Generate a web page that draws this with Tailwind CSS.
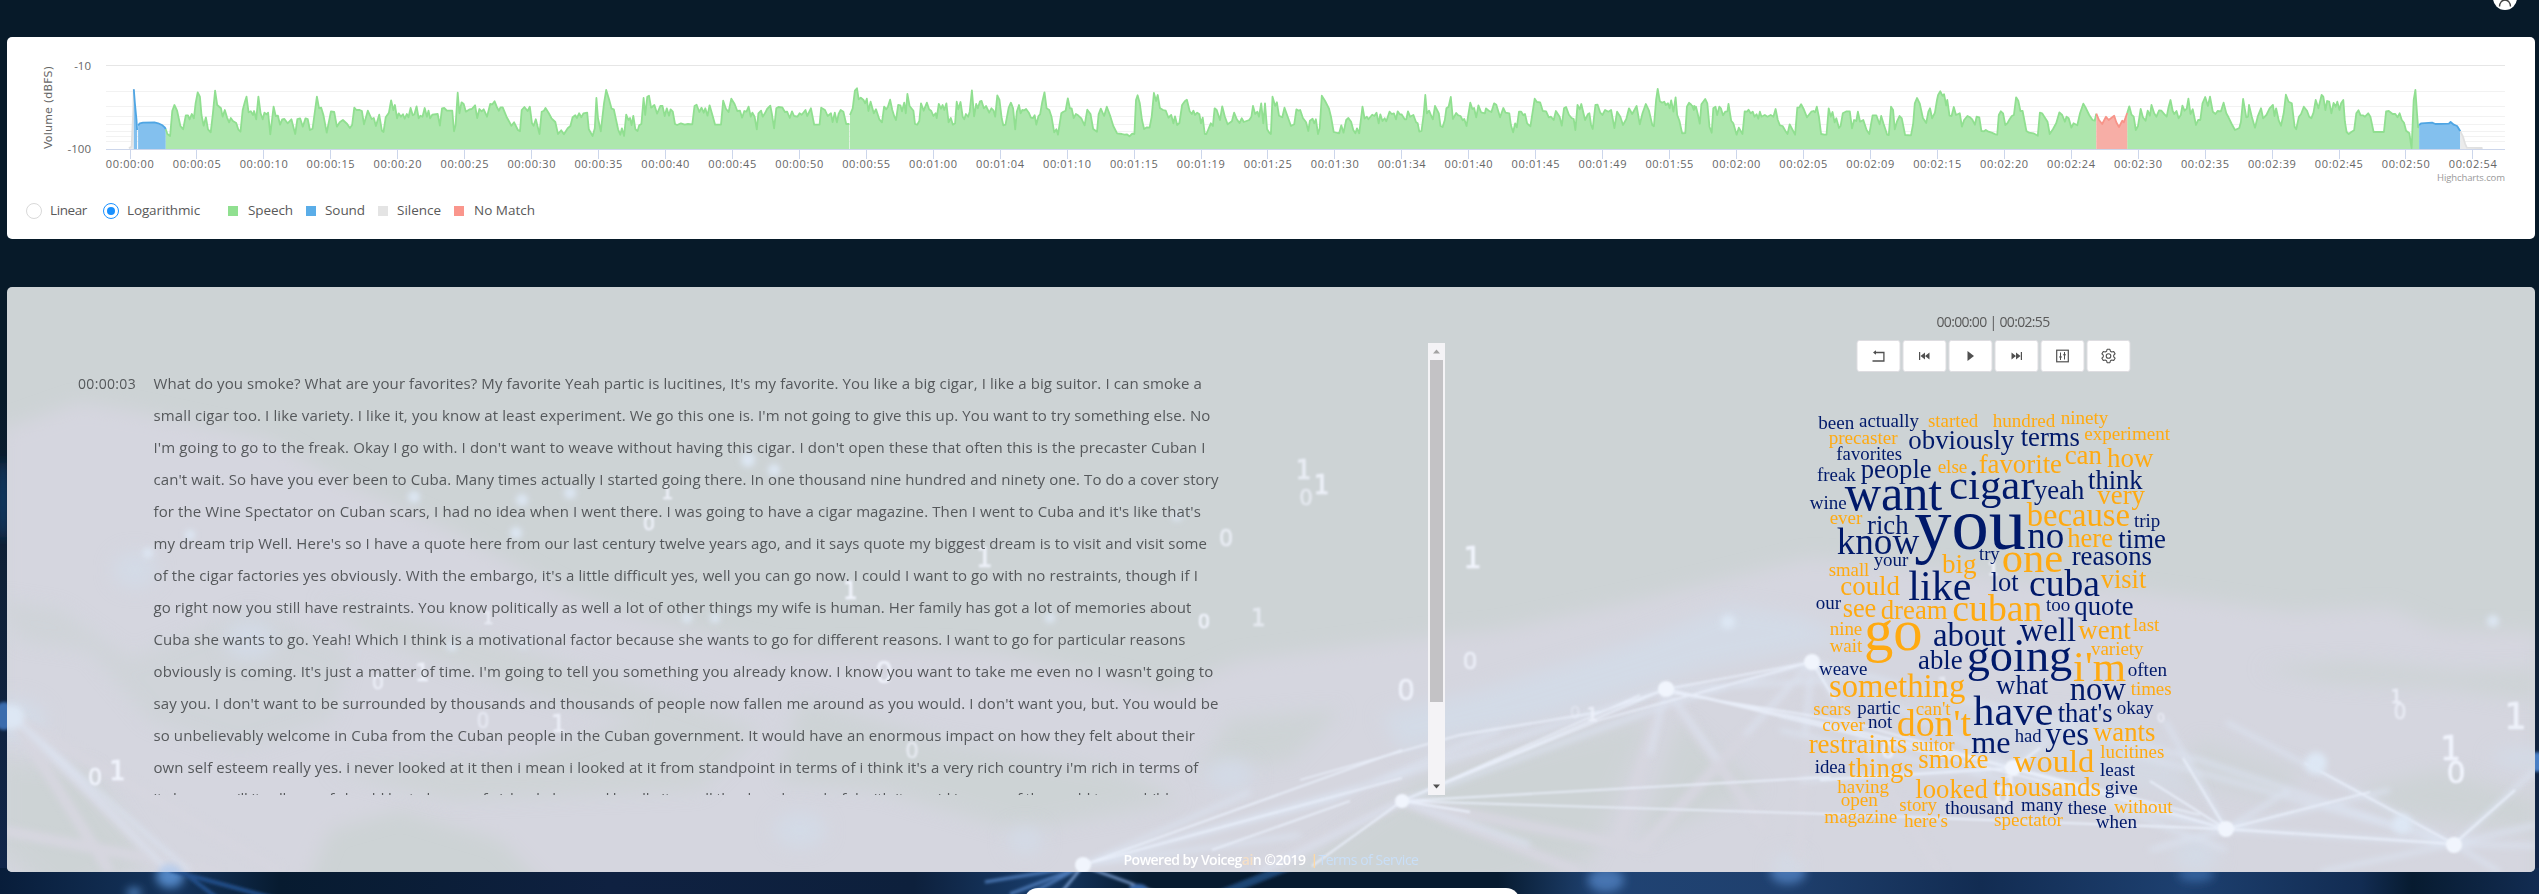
<!DOCTYPE html>
<html lang="en">
<head>
<meta charset="utf-8">
<title>Voicegain transcript</title>
<script src="https://cdn.jsdelivr.net/npm/@tailwindcss/browser@4"></script>
</head>
<body class="relative h-[894px] w-[2539px] overflow-hidden bg-[#071a29] font-['Open_Sans','Noto_Sans',sans-serif] text-[#595959]">

<!-- page backdrop -->
<svg class="absolute inset-0" width="2539" height="894" viewBox="0 0 2539 894">
  <defs>
    <filter id="b6" x="-50%" y="-50%" width="200%" height="200%"><feGaussianBlur stdDeviation="5"/></filter>
    <filter id="b2" x="-50%" y="-50%" width="200%" height="200%"><feGaussianBlur stdDeviation="1.5"/></filter>
    <linearGradient id="side" x1="0" y1="0" x2="0" y2="1"><stop offset="0" stop-color="#071a29"/><stop offset=".35" stop-color="#0f2036"/><stop offset="1" stop-color="#11264a"/></linearGradient>
    <linearGradient id="foot" x1="0" y1="0" x2="1" y2="0"><stop offset="0" stop-color="#081d3a"/><stop offset=".07" stop-color="#15345c"/><stop offset=".11" stop-color="#071b30"/><stop offset=".24" stop-color="#0f2141"/><stop offset=".36" stop-color="#0d203c"/><stop offset=".41" stop-color="#183c6a"/><stop offset=".45" stop-color="#071b30"/><stop offset=".59" stop-color="#071b30"/><stop offset=".63" stop-color="#204373"/><stop offset=".7" stop-color="#1f406e"/><stop offset=".78" stop-color="#122c52"/><stop offset=".86" stop-color="#1d4070"/><stop offset=".93" stop-color="#122c52"/><stop offset=".95" stop-color="#071b30"/><stop offset="1" stop-color="#122c52"/></linearGradient>
  </defs>
  <rect x="0" y="400" width="10" height="480" fill="url(#side)"/>
  <rect x="2530" y="540" width="9" height="340" fill="url(#side)"/>
  <ellipse cx="3" cy="500" rx="5" ry="40" fill="#153c6b" filter="url(#b6)"/>
  <ellipse cx="4" cy="716" rx="10" ry="14" fill="#3a6cad" filter="url(#b2)"/>
  <ellipse cx="2537" cy="762" rx="8" ry="10" fill="#4a7fc4" filter="url(#b2)"/>
  <rect x="0" y="868" width="2539" height="26" fill="url(#foot)"/>
  <g filter="url(#b6)">
    <ellipse cx="170" cy="876" rx="14" ry="12" fill="#5387c6"/>
    <ellipse cx="134" cy="893" rx="7" ry="5" fill="#5387c6"/>
    <ellipse cx="1606" cy="880" rx="18" ry="12" fill="#4674b1"/>
    <ellipse cx="1788" cy="872" rx="18" ry="12" fill="#4674b1"/>
    <ellipse cx="2196" cy="874" rx="18" ry="8" fill="#34629c"/>
  </g>
  <g stroke="#4b78b5" fill="none" filter="url(#b2)">
    <path d="M1083 866L1010 894M1083 866L1030 894M1083 866L985 882" stroke-width="3"/>
    <path d="M1083 866L1160 894M1083 866L1060 894" stroke="#8db1e6" stroke-width="2"/>
    <path d="M1300 862L1220 894" stroke="#1f4473" stroke-width="8"/>
    <ellipse cx="1138" cy="888" rx="9" ry="4" fill="#3766a6" stroke="none"/>
    <path d="M170 870L280 900M180 870L220 900" stroke-width="4" stroke="#214e88"/>
  </g>
</svg>

<div class="relative flex h-[894px] flex-col px-[7px] pr-1">
  <header class="flex h-[37px] shrink-0 items-start justify-end pr-[18px]">
    <svg class="-mt-[14px] block" width="24" height="24" viewBox="0 0 24 24" fill="none"><circle cx="12" cy="12" r="12" fill="#fff"/><path d="M6.500 20.500a5.500 6.500 0 0 1 11 0" stroke="#444" stroke-width="1.400"/><circle cx="12" cy="9" r="4.500" stroke="#444" stroke-width="1.400"/></svg>
  </header>

  <!-- volume chart -->
  <section class="h-[202px] shrink-0 rounded-[5px] bg-white">
    <svg class="block" width="2528" height="150" viewBox="7 37 2528 150" id="chart">
      <g stroke="#f2f2f2"><path d="M106 91.500H2505M106 106.500H2505M106 116.500H2505M106 124.500H2505M106 131.500H2505M106 136.500H2505M106 141.500H2505"/></g>
      <path d="M106 65.500H2505" stroke="#e6e6e6"/>
      <g id="areas"></g>
      <path d="M106 149.500H2505" stroke="#ccd6eb"/>
      <g id="ticks" class="text-[11px]" fill="#666" text-anchor="middle"></g>
      <g class="text-[11.500px]" fill="#666" text-anchor="end"><text x="91" y="70">-10</text><text x="91" y="153">-100</text></g>
      <text class="font-['DejaVu_Sans','Open_Sans',sans-serif] text-[11px]" fill="#666" transform="translate(52 149) rotate(-90)" textLength="83">Volume (dBFS)</text>
      <text x="2505" y="181" class="text-[9.500px]" fill="#999" text-anchor="end" textLength="68">Highcharts.com</text>
    </svg>
    <div class="flex h-[47px] items-center pl-[19px] text-[13.500px]">
      <span class="size-4 rounded-full border border-[#d9d9d9]"></span><span class="ml-2" data-w="37">Linear</span>
      <span class="ml-4 flex size-4 items-center justify-center rounded-full border border-[#1890ff]"><i class="size-2 rounded-full bg-[#1890ff]"></i></span><span class="ml-2" data-w="73">Logarithmic</span>
      <i class="ml-[28px] size-2.5 bg-[#90e090]"></i><span class="ml-[10px]" data-w="45">Speech</span>
      <i class="ml-[13px] size-2.5 bg-[#5aade8]"></i><span class="ml-[9px]" data-w="40">Sound</span>
      <i class="ml-[13px] size-2.5 bg-[#e4e4e4]"></i><span class="ml-[9px]" data-w="44">Silence</span>
      <i class="ml-[13px] size-2.5 bg-[#fa968c]"></i><span class="ml-[10px]" data-w="61">No Match</span>
    </div>
  </section>

  <!-- transcript and player -->
  <section class="relative mt-12 flex h-[585px] shrink-0 items-start overflow-hidden rounded-[5px] bg-[#cdd3d5]">
    <svg class="absolute inset-0" width="2528" height="585" viewBox="7 287 2528 585">
      <defs>
        <filter id="soft" x="-20%" y="-20%" width="140%" height="140%"><feGaussianBlur stdDeviation="9"/></filter>
        <filter id="s1" filterUnits="userSpaceOnUse" x="0" y="280" width="2539" height="600"><feGaussianBlur stdDeviation=".8"/></filter>
        <filter id="s3" filterUnits="userSpaceOnUse" x="0" y="280" width="2539" height="600"><feGaussianBlur stdDeviation="3"/></filter>
      </defs>
      <g filter="url(#soft)" fill="#d5d6df">
        <path d="M0 430L80 402L130 410L270 440L340 480L450 530L560 590L650 620L780 650L900 648L1000 652L1170 690L1240 660L1400 640L1500 630L1640 600L1810 558L1950 570L2150 593L2290 612L2390 608L2440 630L2539 632V900H560L500 840L400 810L330 830L300 900H0Z"/>
      </g>
      <g filter="url(#soft)" fill="#cdd3d5">
        <path d="M0 600L20 640L90 650L150 720L240 750L330 720L350 650L250 610L130 660L60 610Z" opacity=".7"/>
        <path d="M0 760L90 770L150 860L60 900L0 850Z"/>
        <path d="M330 770L520 760L640 720L520 690L380 640L320 600L420 620L620 680L760 730L700 790L450 800Z" opacity=".8"/>
        <path d="M800 700L940 740L1120 770L1180 800L1020 830L880 790L780 780Z"/>
        <path d="M1230 720L1340 710L1290 760L1200 770Z"/>
        <path d="M1250 900L1420 780L1560 740L1650 720L1590 860L1500 890Z"/>
        <path d="M1680 720L1760 790L1640 840Z"/>
        <path d="M2260 668L2350 662L2460 672L2535 670V700L2450 688L2330 682Z"/>
        <path d="M2360 790L2440 770L2535 800V830L2400 815Z"/>
        <path d="M2200 740L2300 770L2280 800L2180 780Z" opacity=".7"/>
      </g>
      <g filter="url(#soft)" fill="#d3dae6">
        <path d="M1380 715L1480 690L1640 640L1730 605L1800 615L1850 640L1700 670L1540 720L1400 750Z"/>
        <ellipse cx="800" cy="830" rx="26" ry="18"/><ellipse cx="1025" cy="840" rx="18" ry="14"/>
        <ellipse cx="135" cy="570" rx="22" ry="18"/><ellipse cx="250" cy="640" rx="26" ry="20"/>
        <ellipse cx="1230" cy="775" rx="24" ry="16"/><ellipse cx="1460" cy="710" rx="26" ry="12"/>
        <ellipse cx="1788" cy="866" rx="16" ry="12"/><ellipse cx="2196" cy="855" rx="22" ry="18"/>
        <ellipse cx="2525" cy="758" rx="34" ry="10"/><ellipse cx="12" cy="720" rx="34" ry="22"/>
        <path d="M1900 700L2140 720L2200 800L2010 760Z" opacity=".6"/>
      </g>
      <g stroke="#d6d6df" stroke-width="11" fill="none" filter="url(#s3)">
        <path d="M1666 689L1615 850M1666 689L1765 830M1812 662L1640 850M1812 662L1798 860M1812 662L1940 872M1402 801L1250 872M1402 801L1580 872M1402 801L1650 850"/>
        <path d="M12 716L170 872M12 716L280 872M12 716L110 872M0 830L220 872"/>
      </g>
      <g stroke="#dbe2ef" stroke-width="4" fill="none" filter="url(#s3)">
        <path d="M1083 865L1402 775L1666 689M1083 865L1330 800L1500 730M1083 865L1300 835M1402 801L1260 872M1402 801L1530 845M1083 865L1250 792"/>
        <path d="M1402 801L1666 705L1812 662M1812 662L2200 760L2454 844M1812 662L2013 768M1812 662L1745 735M1812 662L1805 735M1812 662L1880 770M1666 689L1840 680M1666 689L1650 755M1666 689L1718 760"/>
        <path d="M1780 715L2013 768L2226 829M1780 730L2226 829M2226 829L2390 790M2226 829L2454 844M2226 829L2150 850M2226 829L2290 790M2226 829L2165 720M2454 844L2226 722M2454 844L2535 770M2454 844L2535 825M2454 844L2535 846M2454 844L2120 750M2013 768L1800 780M2013 768L2226 850M2013 768L2080 715M2454 844L2320 872M2454 844L2500 872"/>
        <path d="M12 716L190 872M12 716L170 872"/>
      </g>
      <g stroke="#eaf0fb" stroke-width="1.800" fill="none" filter="url(#s1)">
        <path d="M1402 801L1666 689L1812 662M1402 801L1600 720L1812 662M1300 780L1460 735L1600 712L1666 689M1402 801L1640 695M1402 801L1830 777M1402 801L1830 814M1666 689L1800 718L2013 768M1666 689L1830 728L2100 796M1666 692L1850 722L2226 829" opacity=".9"/>
        <path d="M1083 865L1402 750M1083 865L1402 778M1212 850L1350 801M1312 866L1402 801M1402 801L1470 812M1830 814L2226 829M1820 780L2013 768M2013 768L2226 829M2150 781L2226 829M2226 829L2183 758M2226 829L2370 792M2226 829L2454 844M2454 844L2305 763M2454 844L2515 790M2013 768L2200 815M2013 768L2040 748M1812 662L1835 700"/>
      </g>
      <g fill="#f1f5fd" filter="url(#s1)">
        <circle cx="1402" cy="801" r="7"/><circle cx="1083" cy="865" r="8"/><circle cx="1666" cy="689" r="8"/><circle cx="1812" cy="662" r="8"/><circle cx="2013" cy="768" r="8"/><circle cx="2226" cy="829" r="8"/><circle cx="2454" cy="845" r="8"/>
      </g>
      <g filter="url(#s3)" fill="#dde7f4"><circle cx="2316" cy="763" r="11"/><circle cx="2402" cy="824" r="10"/><circle cx="12" cy="717" r="12"/><circle cx="170" cy="877" r="13" fill="#b9cdeb"/><circle cx="1728" cy="622" r="7"/>
        <circle cx="414" cy="497" r="6"/><circle cx="522" cy="500" r="6"/><circle cx="570" cy="493" r="6"/><circle cx="748" cy="460" r="7"/><circle cx="774" cy="470" r="6"/><circle cx="516" cy="533" r="6"/><circle cx="148" cy="553" r="5"/><circle cx="190" cy="535" r="5"/><circle cx="687" cy="618" r="5"/><circle cx="715" cy="618" r="5"/><circle cx="452" cy="646" r="5"/><circle cx="523" cy="643" r="5"/><circle cx="1050" cy="618" r="5"/><circle cx="1177" cy="516" r="5"/><circle cx="2493" cy="621" r="6"/></g>
      <g id="bits" fill="#f1f4fd" stroke="#f1f4fd" stroke-width=".7" text-anchor="middle" filter="url(#s1)"></g>
    </svg>

    <div class="relative mt-14 flex h-[452px] w-[1438px] shrink-0">
      <div class="flex w-[1421px] overflow-hidden pl-[71px] pt-[24px] text-[15px] leading-8 text-[#55585b]">
        <div class="w-[75.500px] shrink-0"><span data-w="58" class="whitespace-nowrap text-[14px]">00:00:03</span></div>
        <div class="flex flex-col items-start whitespace-nowrap">
          <span class="h-8 shrink-0" data-w="1048.500">What do you smoke? What are your favorites? My favorite Yeah partic is lucitines, It's my favorite. You like a big cigar, I like a big suitor. I can smoke a</span>
          <span class="h-8 shrink-0" data-w="1057">small cigar too. I like variety. I like it, you know at least experiment. We go this one is. I'm not going to give this up. You want to try something else. No</span>
          <span class="h-8 shrink-0" data-w="1052">I'm going to go to the freak. Okay I go with. I don't want to weave without having this cigar. I don't open these that often this is the precaster Cuban I</span>
          <span class="h-8 shrink-0" data-w="1065">can't wait. So have you ever been to Cuba. Many times actually I started going there. In one thousand nine hundred and ninety one. To do a cover story</span>
          <span class="h-8 shrink-0" data-w="1047.500">for the Wine Spectator on Cuban scars, I had no idea when I went there. I was going to have a cigar magazine. Then I went to Cuba and it's like that's</span>
          <span class="h-8 shrink-0" data-w="1053.500">my dream trip Well. Here's so I have a quote here from our last century twelve years ago, and it says quote my biggest dream is to visit and visit some</span>
          <span class="h-8 shrink-0" data-w="1044.500">of the cigar factories yes obviously. With the embargo, it's a little difficult yes, well you can go now. I could I want to go with no restraints, though if I</span>
          <span class="h-8 shrink-0" data-w="1038">go right now you still have restraints. You know politically as well a lot of other things my wife is human. Her family has got a lot of memories about</span>
          <span class="h-8 shrink-0" data-w="1032">Cuba she wants to go. Yeah! Which I think is a motivational factor because she wants to go for different reasons. I want to go for particular reasons</span>
          <span class="h-8 shrink-0" data-w="1060">obviously is coming. It's just a matter of time. I'm going to tell you something you already know. I know you want to take me even no I wasn't going to</span>
          <span class="h-8 shrink-0" data-w="1065">say you. I don't want to be surrounded by thousands and thousands of people now fallen me around as you would. I don't want you, but. You would be</span>
          <span class="h-8 shrink-0" data-w="1041.500">so unbelievably welcome in Cuba from the Cuban people in the Cuban government. It would have an enormous impact on how they felt about their</span>
          <span class="h-8 shrink-0" data-w="1045">own self esteem really yes. i never looked at it then i mean i looked at it from standpoint in terms of i think it's a very rich country i'm rich in terms of</span>
          <span class="-mt-px h-8 shrink-0" data-w="1027">its human will its all way of should be to buy a safe island place and hurdle it a well thank and wonderful with its rapid income of the world to my child a</span>
        </div>
      </div>
      <div class="flex h-[452px] w-[17px] flex-col items-center bg-[#f4f3f6]">
        <svg width="17" height="17" viewBox="0 0 17 17"><path d="M5 10.500L8.500 6.500L12 10.500Z" fill="#a3a3a3"/></svg>
        <div class="h-[342px] w-[13px] bg-[#c3c2c5]"></div>
        <svg class="mt-auto" width="17" height="17" viewBox="0 0 17 17"><path d="M5 6.500L8.500 10.500L12 6.500Z" fill="#505050"/></svg>
      </div>
    </div>

    <div class="relative flex grow flex-col items-center">
      <div class="ml-[6px] mt-6 whitespace-nowrap text-[14px] leading-[22px]"><span data-w="113">00:00:00 | 00:02:55</span></div>
      <div class="mt-[7px] flex w-[274px] translate-x-[3.500px] gap-0.5 text-[#505050] [&>span]:flex [&>span]:h-8 [&>span]:w-11 [&>span]:items-center [&>span]:justify-center [&>span]:rounded-[3px] [&>span]:border [&>span]:border-[#dedde1] [&>span]:bg-white">
        <span><svg width="14" height="14" viewBox="0 0 14 14" fill="none" stroke="currentColor" stroke-width="1.300"><path d="M3 3.500H12.400V12H1"/><path d="M1.500 3.500L4.500 1.200V5.800Z" fill="currentColor" stroke="none"/></svg></span>
        <span><svg width="12" height="10" viewBox="0 0 12 10" fill="currentColor"><path d="M.5 1H1.700V9H.500ZM2 5L6.500 1.500V8.500ZM6.500 5L11 1.500V8.500Z"/></svg></span>
        <span><svg width="8" height="12" viewBox="0 0 8 12" fill="currentColor"><path d="M1 1L7.500 6L1 11Z"/></svg></span>
        <span><svg width="12" height="10" viewBox="0 0 12 10" fill="currentColor"><path d="M11.500 1H10.300V9H11.500ZM10 5L5.500 1.500V8.500ZM5.500 5L1 1.500V8.500Z"/></svg></span>
        <span><svg width="14" height="14" viewBox="0 0 14 14" fill="none" stroke="currentColor" stroke-width="1.200"><rect x="1.200" y="1.200" width="11.600" height="11.600"/><path d="M5 3.500V11M9 3V10.500" stroke-width="1"/><path d="M3.300 7.500H6.700L5 9.800ZM7.300 6.200H10.700L9 3.900Z" fill="currentColor" stroke="none"/></svg></span>
        <span><svg width="16" height="16" viewBox="0 0 16 16" fill="none" stroke="currentColor" stroke-width="1.100" stroke-linejoin="round"><circle cx="8" cy="8" r="2.300"/><path d="M6.600 1.300H9.400L9.900 3.200L11.300 4L13.200 3.500L14.600 5.900L13.200 7.200V8.800L14.600 10.100L13.200 12.500L11.300 12L9.900 12.800L9.400 14.700H6.600L6.100 12.800L4.700 12L2.800 12.500L1.400 10.100L2.800 8.800V7.200L1.400 5.900L2.800 3.500L4.700 4L6.100 3.200Z"/></svg></span>
      </div>
      <svg class="mt-[14px] -translate-x-px overflow-visible" width="420" height="460" viewBox="1780 386 420 460" id="cloud"></svg>
    </div>

    <footer class="absolute left-[1116.500px] top-[562px] flex whitespace-pre text-[14px] leading-[22px] text-white"><span data-w="182" class="font-semibold">Powered by Voiceg<span class="text-[#f5dfc6]">ai</span>n ©2019</span><span class="ml-[5px] mr-1 font-semibold text-[#ffd9a3]" data-w="4">|</span><span class="text-[#c9dff8]" data-w="100">Terms of Service</span></footer>
  </section>
  <div class="ml-[1017px] mt-4 h-10 w-[496px] shrink-0 self-start rounded-[14px] bg-white"></div>
</div>

<script>
const NS='http://www.w3.org/2000/svg';
function el(parent,tag,attrs,text){const e=document.createElementNS(NS,tag);for(const k in attrs)e.setAttribute(k,attrs[k]);if(text!=null)e.textContent=text;parent.appendChild(e);return e;}

// x axis
const labels='00:00 00:05 00:10 00:15 00:20 00:25 00:30 00:35 00:40 00:45 00:50 00:55 01:00 01:04 01:10 01:15 01:19 01:25 01:30 01:34 01:40 01:45 01:49 01:55 02:00 02:05 02:09 02:15 02:20 02:24 02:30 02:35 02:39 02:45 02:50 02:54'.split(' ');
const ticks=document.getElementById('ticks');
labels.forEach((t,i)=>{const x=129.500+i*66.940;const p=Math.round(x)+.5;el(ticks,'path',{d:`M${p} 150V159`,stroke:'#ccd6eb'});el(ticks,'text',{x:x+.3,y:168,textLength:48},'00:'+t);});

// volume samples, one list per sheet of 850 units; y runs from 196 (-10) to 448 (-100)
const sheets=[
[0,'306,388 309,402 314,408 318,332 322,315 327,332 333,378 338,388 343,346 347,346 350,358 354,342 358,355 361,310 365,277 369,290 372,345 376,377 380,352 384,388 389,397 393,340 397,272 401,315 408,325 411,350 415,330 419,352 423,367 426,354 430,363 436,369 440,389 444,395 448,330 452,305 455,290 459,337 463,334 467,345 469,333 473,358 477,290 481,340 485,358 488,338 492,343 495,338 499,403 505,320 509,348 513,347 517,374 521,358 525,357 531,370 538,358 545,402 549,357 554,355 559,380 564,355 568,357 572,390 577,386 585,290 589,325 593,323 597,345 603,398 611,334 617,336 622,380 627,367 633,360 641,372 646,384 650,375 654,323 658,330 664,330 668,333 672,373 679,332 686,357 690,354 694,378 700,344 705,392 708,396 712,352 718,338 722,301 726,330 729,315 733,355 736,340 740,350 744,343 747,356 751,342 754,352 758,324 762,346 765,343 769,319 773,355 776,347 780,350 784,324 788,350 791,332 794,355 798,344 808,342 812,377 816,325 820,324 825,332 835,332 838,394 841,375 845,278 848,340 852,307 856,312 860,335 867,328 871,327 877,316 881,354 885,327 889,334 893,328 899,350 905,312 909,313 913,304 917,320 921,332 924,322 928,322 935,350 939,362 944,377 949,367 956,390 960,394 963,330 968,321 974,333 978,320 982,370 985,377 989,358 996,402 1000,335 1004,332 1007,324 1013,340 1018,355 1025,366 1030,402 1036,391 1041,403 1048,385 1053,378 1057,352 1062,346 1065,354 1069,340 1073,352 1077,340 1084,338 1087,388 1094,408 1098,385 1101,294 1104,355 1109,394 1115,310 1119,270 1124,296 1129,326 1133,328 1141,388 1145,404 1148,385 1152,408 1156,344 1160,360 1163,354 1166,375 1169,348 1173,388 1177,393 1180,376 1184,372 1188,294 1191,345 1195,290 1198,287 1202,323 1208,315 1213,341 1219,318 1223,318 1227,348 1231,325 1235,347 1238,328 1242,335 1246,372 1250,375 1257,370 1264,374 1270,372 1278,373 1282,318 1286,314 1291,336 1295,323 1299,338 1302,325 1306,347 1310,316 1315,345 1320,374 1331,374 1335,302 1340,326 1345,336 1350,296 1356,312 1361,333 1366,332 1370,353 1374,333 1378,335 1382,320 1386,350 1389,338 1393,350 1397,388 1400,340 1405,332 1408,350 1412,340 1416,327 1422,317 1425,342 1429,385 1433,325 1437,321 1444,322 1449,336 1453,335 1458,354 1462,334 1466,348 1472,350 1476,340 1480,344 1487,330 1490,348 1497,325 1503,374 1513,374 1516,323 1523,330 1528,348 1534,340 1537,366 1541,338 1545,367 1548,342 1552,330 1557,335 1562,372 1568,372'],
[850,'0,345 5,325 9,272 13,265 16,298 20,293 25,300 28,310 31,296 34,333 38,305 44,340 48,328 54,358 59,367 63,320 67,328 70,320 74,299 78,330 82,350 85,360 89,315 93,316 96,334 100,308 103,340 106,282 110,318 117,332 120,372 124,374 128,363 131,310 136,332 142,308 146,328 150,333 154,348 158,340 160,354 164,312 168,326 171,315 174,330 178,310 182,367 186,354 190,374 194,370 197,305 200,328 204,306 208,350 211,358 214,342 218,350 221,335 225,271 229,349 233,312 236,325 240,304 243,303 247,325 251,318 257,338 261,325 265,332 268,350 272,286 276,300 280,355 283,376 287,374 293,323 297,308 301,325 305,388 308,335 312,315 315,340 318,330 322,331 325,327 330,338 334,353 338,354 341,346 344,374 348,348 351,343 355,305 359,277 363,325 368,330 372,350 377,397 381,388 384,404 390,340 394,335 398,332 402,295 406,325 409,325 413,354 417,342 421,346 427,355 433,376 438,329 444,342 449,387 456,395 459,343 463,326 469,348 474,320 480,346 486,378 493,400 502,402 507,404 511,403 516,409 521,401 525,402 528,300 531,286 535,310 539,360 543,387 548,382 553,383 557,350 561,279 565,303 568,285 572,324 578,330 583,332 588,353 593,345 597,370 600,349 604,375 608,369 613,315 618,304 622,299 627,334 631,342 634,332 637,345 641,338 645,343 648,370 651,353 655,402 658,402 666,370 670,378 673,325 677,330 683,360 687,319 692,350 697,373 705,364 709,338 714,358 719,369 723,355 727,366 737,360 741,350 744,318 748,342 752,335 755,350 759,310 763,370 766,310 770,388 774,398 777,402 780,290 785,318 788,307 792,347 798,352 802,323 808,350 814,378 820,373 824,328 828,332 831,330 836,354 842,367 846,393 849,362 854,356 857,370 860,358 864,402 867,385 871,287 877,303 884,325 888,350 893,396 900,399 903,400 907,376 911,398 916,360 920,354 925,365 929,390 933,400 936,385 940,400 946,320 950,356 954,350 957,358 964,344 968,348 972,338 976,370 979,343 983,363 987,355 990,364 996,335 1000,342 1004,340 1008,358 1011,334 1015,343 1018,343 1024,358 1027,358 1030,334 1034,350 1040,345 1045,367 1048,370 1051,395 1055,393 1059,343 1062,285 1065,340 1069,332 1073,348 1076,358 1080,318 1087,340 1090,378 1094,381 1098,360 1101,325 1105,320 1109,291 1113,357 1119,339 1123,346 1127,348 1131,361 1134,357 1138,378 1145,308 1149,327 1152,324 1156,352 1160,316 1165,337 1172,340 1174,325 1179,332 1184,336 1189,310 1193,314 1200,352 1206,324 1210,338 1217,340 1220,375 1224,397 1228,370 1231,382 1235,335 1239,335 1243,346 1246,342 1250,370 1256,379 1264,296 1268,306 1274,307 1279,333 1285,334 1290,352 1294,350 1299,360 1303,333 1310,350 1314,377 1318,325 1322,321 1327,344 1332,354 1336,357 1339,390 1343,315 1347,328 1350,312 1357,360 1362,343 1365,340 1368,375 1371,387 1376,315 1380,314 1385,338 1389,345 1394,330 1400,335 1405,330 1411,384 1416,335 1422,350 1427,375 1433,357 1438,325 1444,342 1452,318 1458,373 1463,340 1469,312 1475,332 1481,375 1484,379 1488,300 1491,267 1495,304 1499,308 1503,305 1506,315 1510,310 1513,325 1516,301 1520,335 1524,292 1527,345 1531,362 1536,400 1542,399 1545,320 1549,308 1555,320 1559,318 1563,340 1568,372'],
[1690,'0,310 4,318 7,330 11,320 14,340 18,371 21,313 28,297 32,310 36,380 40,398 43,325 47,320 50,345 54,320 57,325 61,346 65,335 69,334 71,312 76,362 80,370 86,404 90,383 97,402 101,334 105,335 108,329 112,340 116,335 119,350 123,343 126,356 129,335 132,350 138,345 143,350 149,345 154,350 158,327 162,360 166,376 171,378 176,392 180,402 184,373 188,385 194,404 198,323 202,322 205,313 210,328 216,352 224,335 228,333 231,337 234,320 238,350 242,402 248,404 252,404 256,325 260,350 263,336 267,367 270,355 275,384 278,378 282,340 289,334 295,334 299,385 303,360 307,363 310,335 314,365 320,360 326,390 331,402 337,346 344,346 350,373 353,348 357,370 364,404 367,405 371,320 375,330 378,388 382,365 387,348 391,355 397,405 408,406 412,370 415,310 419,294 424,310 430,354 436,369 440,335 443,325 447,355 452,338 456,300 458,285 462,274 466,287 469,283 473,317 475,300 479,347 483,348 487,321 491,345 498,340 502,380 506,360 512,348 517,352 521,358 526,374 529,350 534,352 538,393 543,394 546,390 551,395 557,398 564,403 567,404 570,345 574,334 578,340 582,375 586,370 590,358 594,348 598,345 602,292 606,302 610,333 614,333 621,393 626,398 634,400 642,407 646,338 650,340 654,350 660,365 664,402 670,388 676,370 682,337 687,345 692,365 695,350 699,355 704,383 708,370 715,376 720,340 726,311 731,325 737,345 743,360 747,362 750,341'],
[1690,'807,339 811,319 815,344 819,350 823,390 827,378 832,327 836,352 841,362 845,332 849,347 852,315 857,340 861,350 866,331 870,332 876,343 880,350 883,325 887,300 891,333 894,342 898,333 902,355 906,345 909,317 913,332 917,326 920,296 924,342 928,328 934,375 938,360 942,360 946,310 951,291 956,318 960,290 965,335 970,342 974,333 980,334 985,308 990,340 994,352 1000,372 1006,390 1014,384 1017,366 1021,297 1027,352 1030,350 1032,315 1037,350 1043,383 1048,350 1054,325 1058,355 1064,345 1070,325 1076,315 1079,348 1082,325 1087,362 1091,377 1096,340 1100,284 1105,305 1111,310 1116,380 1119,388 1124,350 1128,342 1133,320 1139,332 1143,350 1147,355 1151,338 1155,300 1160,325 1166,285 1169,290 1173,330 1176,303 1180,305 1184,340 1188,309 1192,320 1195,305 1199,330 1202,310 1206,300 1209,365 1212,396 1216,402 1220,397 1226,391 1230,340 1234,331 1238,346 1242,346 1246,350 1252,340 1256,350 1262,396 1281,396 1285,334 1290,333 1297,342 1302,342 1306,352 1310,340 1314,360 1318,368 1322,392 1328,400 1332,445 1336,300 1339,270 1342,340 1344,382 1346,375']
];
const areas=document.getElementById('areas');
function area(off,str,stroke,fill){
  const pts=str.split(' ').map(p=>{const a=p.split(',').map(Number);return [(off+a[0]/1.8460).toFixed(1),(a[1]/3).toFixed(1)];});
  const line=pts.map(p=>p.join(' ')).join('L');
  el(areas,'path',{d:`M${pts[0][0]} 149L${line}L${pts[pts.length-1][0]} 149Z`,fill:fill});
  el(areas,'path',{d:'M'+line,fill:'none',stroke:stroke,'stroke-width':1.8,'stroke-linejoin':'round'});
}
area(0,'238,444 243,440 246,330 247,268','#e0e0e0','#ebebeb');
area(0,'247,268 249,310 252,360 253,390','#4fa5e3','#83c0ee');
area(0,'255,376 258,370 264,368 285,367 292,370 300,376 304,382 306,388','#4fa5e3','#83c0ee');
sheets.forEach(s=>area(s[0],s[1],'#90df90','#ade7ad'));
area(1690,'750,341 755,360 761,372 768,350 773,360 783,347 787,367 792,381 798,362 801,367 807,339','#f79489','#f7aea6');
area(1690,'1346,375 1350,370 1370,368 1376,372 1401,371 1404,366 1410,374 1416,378 1422,394','#4fa5e3','#83c0ee');
area(1690,'1422,394 1427,410 1431,432 1434,443 1463,444','#e0e0e0','#ebebeb');

// floating binary digits: digit, x, y, size, opacity
const bits=document.getElementById('bits');
[[1,1303,470,26,.8],[1,1321,485,26,.9],[0,1306,497,22,.7],[0,1226,538,23,.8],[1,1472,557,30,1],[0,1204,621,20,1],[1,1258,617,24,.7],[0,1470,660,24,.8],[0,1406,690,29,.9],[1,984,557,27,.9],[1,850,590,24,1],[0,884,672,30,.9],[0,912,750,22,.7],[0,95,777,23,1],[1,117,770,27,1],[0,378,682,20,.8],[1,422,672,24,.9],[0,483,720,21,.6],[1,558,723,24,.8],[1,667,492,20,.9],[0,649,523,20,.9],[1,488,618,18,.7],[1,2396,696,19,.8],[0,2400,711,21,.7],[1,2515,716,37,.9],[1,2450,748,34,1],[0,2456,772,31,1],[0,1575,712,17,.4],[1,1592,714,19,.8],[1,1993,569,18,1],[1,1943,684,20,.7],[1,1944,750,20,.8],[0,1888,750,22,.9],[1,2010,783,22,.8],[0,2003,795,25,.9],[0,2161,717,13,.7]]
.forEach(b=>el(bits,'text',{x:b[1],y:b[2]+b[3]*.36,'font-size':b[3],opacity:b[4],'font-family':b[0]?'"DejaVu Sans Mono",monospace':'"Noto Sans",sans-serif'},b[0]));

// word cloud: word, left, baseline, right (in thirds of a pixel), colour group
const N='#00196a',O='#ffaa11',cloud=document.getElementById('cloud');
function words(y0,list){list.forEach(w=>{
  const t=el(cloud,'text',{x:1780+w[1]/3,y:y0+w[2]/3,'font-size':100,fill:w[4],'font-family':'"Liberation Serif", serif'},w[0]);
  t.setAttribute('font-size',(100*(w[3]-w[1]+1)/3/t.getComputedTextLength()).toFixed(2));});}
words(290,[['been',118,417,225,N],['actually',240,411,419,N],['started',447,411,597,O],['hundred',641,411,828,O],['ninety',845,402,987,O],['precaster',149,463,355,O],['obviously',388,477,705,N],['terms',725,467,902,N],['experiment',916,450,1172,O],['favorites',172,510,368,N],['favorite',599,548,848,O],['can',857,521,968,O],['how',984,530,1122,O],['freak',114,572,229,N],['people',245,565,457,N],['else',476,548,564,O],['cigar',510,626,766,N],['yeah',765,627,915,N],['think',927,597,1090,N],['very',955,642,1097,O],['wine',92,657,202,N],['want',197,660,489,N],['ever',152,703,249,O],['rich',264,732,388,N],['you',406,776,740,N],['because',743,707,1052,O],['trip',1065,712,1143,N],['know',173,793,420,N],['no',745,773,855,N],['here',865,770,1001,O],['time',1018,773,1160,N],['your',284,828,387,N],['big',489,848,592,O],['try',600,811,661,N],['one',668,846,851,O],['reasons',878,826,1118,N],['small',149,858,270,O]]);
words(560,[['could',184,105,362,O],['like',388,120,576,N],['lot',635,93,718,N],['cuba',750,107,962,N],['visit',965,84,1101,O],['our',110,147,185,N],['see',191,171,291,O],['dream',305,178,505,O],['cuban',520,182,789,O],['too',801,154,873,N],['quote',886,164,1063,N],['nine',152,226,249,O],['go',255,271,430,O],['about',462,257,680,N],['well',722,242,890,N],['went',898,237,1054,O],['last',1062,214,1140,O],['wait',152,276,249,O],['able',417,326,550,N],['going',563,332,879,N],['variety',936,285,1093,O],["i'm",882,363,1040,O],['often',1046,348,1163,N],['weave',120,345,264,N],['something',150,411,558,O],['what',651,403,807,N],['now',872,420,1040,N],['times',1055,405,1177,O],['scars',103,465,215,O],['partic',235,462,363,N],["can't",410,465,514,O],['have',583,494,822,N],["that's",836,486,1000,N],['okay',1013,462,1123,N],['cover',130,514,257,O],['not',267,505,339,N],["don't",353,528,575,O],['me',577,578,694,N],['had',707,546,787,N],['yes',799,556,929,N],['wants',942,542,1128,O],['restraints',89,579,384,O],['suitor',398,573,526,O],['smoke',418,624,627,O],['would',702,635,945,O],['lucitines',964,594,1155,O],['idea',107,640,200,N],['things',208,651,403,O],['least',963,649,1067,N],['having',175,700,329,O],['looked',409,714,626,O],['thousands',642,707,965,O],['give',977,702,1075,N],['open',185,738,296,O],['story',361,754,473,O],['thousand',498,761,703,N],['many',726,752,851,N],['these',866,761,982,N],['without',1005,758,1180,O],['magazine',136,789,354,O],["here's",375,802,506,O],['spectator',645,798,851,O],['when',950,804,1073,N]]);

// fit labels to their column widths once styles and fonts are in
function fit(){
  document.querySelectorAll('[data-w]').forEach(s=>{
    s.style.whiteSpace='pre';s.style.letterSpacing='0.001px';
    const n=[...s.textContent].length,r=document.createRange();
    for(let k=0;k<3;k++){
      r.selectNodeContents(s);
      const cur=parseFloat(s.style.letterSpacing)||0;
      s.style.letterSpacing=(cur+(+s.dataset.w-r.getBoundingClientRect().width)/n).toFixed(4)+'px';
    }
  });
}
fit();
addEventListener('load',fit);
document.fonts.ready.then(fit);
</script>
</body>
</html>
